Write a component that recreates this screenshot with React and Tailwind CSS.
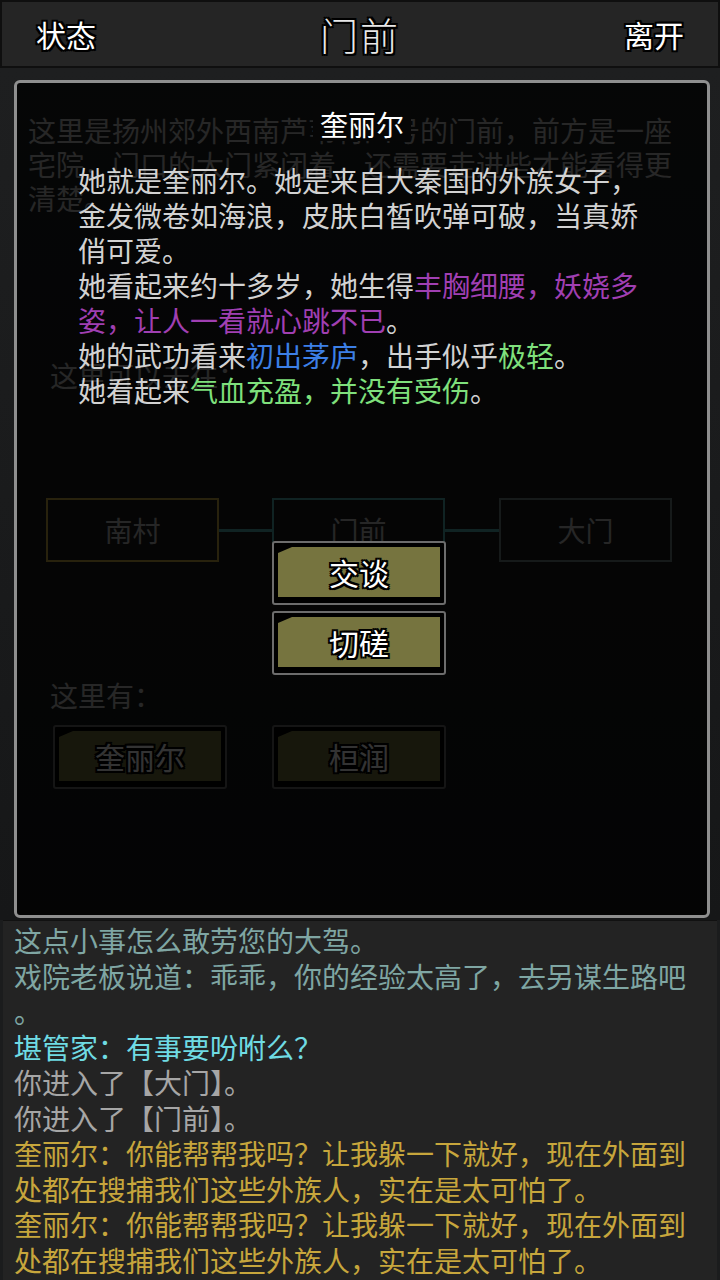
import React from 'react';

const OUTLINE =
  '[text-shadow:2px_0_0_#000,-2px_0_0_#000,0_2px_0_#000,0_-2px_0_#000,2px_2px_0_#000,-2px_-2px_0_#000,2px_-2px_0_#000,-2px_2px_0_#000]';

const LOG = [
  { text: '这点小事怎么敢劳您的大驾。', color: 'text-[#7fa6a3]' },
  { text: '戏院老板说道：乖乖，你的经验太高了，去另谋生路吧', color: 'text-[#7fa6a3]' },
  { text: '。', color: 'text-[#7fa6a3]' },
  { text: '堪管家：有事要吩咐么？', color: 'text-[#6fdbe3]' },
  { text: '你进入了【大门】。', color: 'text-[#a6a6a6]' },
  { text: '你进入了【门前】。', color: 'text-[#a6a6a6]' },
  { text: '奎丽尔：你能帮帮我吗？让我躲一下就好，现在外面到', color: 'text-[#c7a63c]' },
  { text: '处都在搜捕我们这些外族人，实在是太可怕了。', color: 'text-[#c7a63c]' },
  { text: '奎丽尔：你能帮帮我吗？让我躲一下就好，现在外面到', color: 'text-[#c7a63c]' },
  { text: '处都在搜捕我们这些外族人，实在是太可怕了。', color: 'text-[#c7a63c]' },
];

function OliveButton({ label, className = '' }) {
  return (
    <div
      className={`flex h-[64px] w-[174px] flex-col rounded-[3px] border-2 border-[#6c6c6c] bg-black p-[4px] pb-[6px] ${className}`}
    >
      <div className="flex flex-1 items-center justify-center bg-[#76743f] [clip-path:polygon(14px_0,100%_0,100%_100%,0_100%,0_6px)]">
        <span className={`text-[30px] leading-none text-white ${OUTLINE}`}>{label}</span>
      </div>
    </div>
  );
}

function MapBox({ label, border }) {
  return (
    <div className={`flex h-[64px] w-[173px] items-center justify-center border-2 ${border} text-[28px] text-[#bdbdbd]`}>
      {label}
    </div>
  );
}

// the room page that sits dimmed behind the character popup
function Scene() {
  return (
    <div className="flex flex-col pt-[45px] text-[28px] leading-[34px] text-[#c0c0c0]">
      <div className="pl-[28px]">
        <div>这里是扬州郊外西南芦苇村四号的门前，前方是一座</div>
        <div>宅院，门口的大门紧闭着，还需要走进些才能看得更</div>
        <div>清楚。</div>
      </div>
      <div className="mt-[143px] pl-[50px]">这里可以去往：</div>
      <div className="mt-[106px] flex items-center pl-[46px]">
        <MapBox label="南村" border="border-[#c8a840]" />
        <div className="h-[3px] w-[53px] bg-[#4fb0b0]" />
        <MapBox label="门前" border="border-[#4fb0b0]" />
        <div className="h-[3px] w-[54px] bg-[#4fb0b0]" />
        <MapBox label="大门" border="border-[#6f8282]" />
      </div>
      <div className="mt-[116px] pl-[50px]">这里有：</div>
      <div className="mt-[13px] flex gap-[45px] pl-[53px]">
        <OliveButton label="奎丽尔" />
        <OliveButton label="桓润" />
      </div>
    </div>
  );
}

function CharacterPopup() {
  return (
    <div className="absolute left-[14px] top-[12px] flex h-[838px] w-[696px] flex-col items-center rounded-[6px] border-[3px] border-[#8f8f8f] bg-black/80">
      <div className="mt-[24px] bg-[#060606] px-[7px] text-[28px] leading-[34px] text-white">奎丽尔</div>
      <div className="mt-[22px] w-[568px] text-[28px] leading-[35px] text-[#d2d2d2]">
        <p>她就是奎丽尔。她是来自大秦国的外族女子，金发微卷如海浪，皮肤白皙吹弹可破，当真娇俏可爱。</p>
        <p>
          她看起来约十多岁，她生得
          <span className="text-[#a03fb2]">丰胸细腰，妖娆多姿，让人一看就心跳不已</span>。
        </p>
        <p>
          她的武功看来<span className="text-[#3c7fe6]">初出茅庐</span>，出手似乎
          <span className="text-[#7fe07c]">极轻</span>。
        </p>
        <p>
          她看起来<span className="text-[#7fe07c]">气血充盈，并没有受伤</span>。
        </p>
      </div>
      <div className="mt-[133px] flex flex-col gap-[6px] pr-[6px]">
        <OliveButton label="交谈" />
        <OliveButton label="切磋" />
      </div>
    </div>
  );
}

export default function App() {
  return (
    <div className="flex h-[1280px] w-[720px] flex-col overflow-hidden bg-[#1b1c1d] font-['Noto_Sans_CJK_SC','Noto_Sans',sans-serif]">
      <header className="flex h-[68px] items-center justify-between border-2 border-[#0f0f0f] bg-[#252525] px-[34px]">
        <span className={`text-[30px] leading-none text-white ${OUTLINE}`}>状态</span>
        <span className={`text-[38px] font-light leading-none tracking-[2px] text-[#e8e8e8] ${OUTLINE}`}>门前</span>
        <span className={`text-[30px] leading-none text-white ${OUTLINE}`}>离开</span>
      </header>

      <main className="relative h-[852px] bg-[linear-gradient(180deg,#1e1f20,#161718)]">
        <Scene />
        <CharacterPopup />
      </main>

      <section className="mx-[3px] h-[360px] border-t border-[#111] bg-[#232323] pl-[11px] pt-[2px] text-[28px] leading-[35.5px]">
        {LOG.map((line, i) => (
          <div key={i} className={`whitespace-nowrap ${line.color}`}>
            {line.text}
          </div>
        ))}
      </section>
    </div>
  );
}
